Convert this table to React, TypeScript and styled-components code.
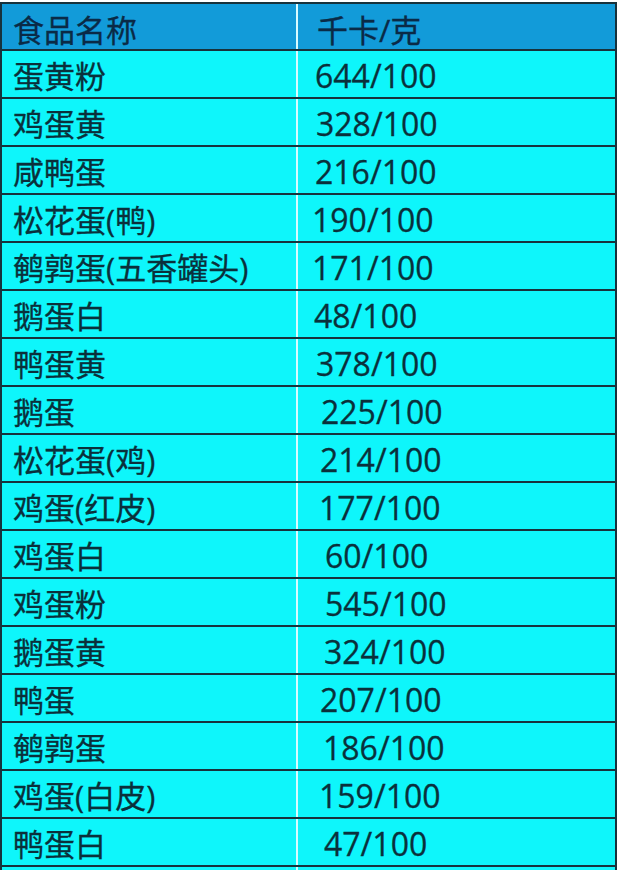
import * as React from 'react'
import styled, { createGlobalStyle } from 'styled-components'

const GlobalStyle = createGlobalStyle`
  html, body {
    margin: 0;
    padding: 0;
    background: #ffffff;
  }
  body {
    font-family: "Open Sans", "Noto Sans CJK SC", sans-serif;
  }
`

const Table = styled.div`
  width: 613px;
  margin-top: 2px;
  border: 2px solid #17323c;
  border-bottom: none;
  display: flex;
  flex-direction: column;
  font-size: 31px;
  line-height: 1;
`

const Row = styled.div<{ $head?: boolean }>`
  display: grid;
  grid-template-columns: 296px 1fr;
  height: ${p => (p.$head ? 45 : 46)}px;
  border-bottom: 2px solid #17323c;
  background: ${p => (p.$head ? '#129bd9' : '#0ef6fb')};
  color: ${p => (p.$head ? '#0a2a46' : '#0a303b')};
`

const NameCell = styled.div<{ $head?: boolean }>`
  display: flex;
  align-items: center;
  padding-left: 11px;
  padding-top: ${p => (p.$head ? 8 : 4)}px;
  border-right: 2px solid #d8fbff;
  white-space: nowrap;
  -webkit-text-stroke: 0.3px currentColor;
`

const ValueCell = styled.div<{ $indent: number; $head?: boolean }>`
  display: flex;
  align-items: center;
  padding-left: ${p => p.$indent}px;
  padding-top: ${p => (p.$head ? 8 : 4)}px;
  font-size: ${p => (p.$head ? 31 : 32)}px;
  white-space: nowrap;
  -webkit-text-stroke: 0.3px currentColor;
`

const rows: [string, string, number][] = [
  ['蛋黄粉', '644/100', 17],
  ['鸡蛋黄', '328/100', 18],
  ['咸鸭蛋', '216/100', 17],
  ['松花蛋(鸭)', '190/100', 14],
  ['鹌鹑蛋(五香罐头)', '171/100', 14],
  ['鹅蛋白', '48/100', 16],
  ['鸭蛋黄', '378/100', 18],
  ['鹅蛋', '225/100', 23],
  ['松花蛋(鸡)', '214/100', 22],
  ['鸡蛋(红皮)', '177/100', 21],
  ['鸡蛋白', '60/100', 27],
  ['鸡蛋粉', '545/100', 27],
  ['鹅蛋黄', '324/100', 26],
  ['鸭蛋', '207/100', 22],
  ['鹌鹑蛋', '186/100', 25],
  ['鸡蛋(白皮)', '159/100', 21],
  ['鸭蛋白', '47/100', 26],
]

export default function App() {
  return (
    <>
      <GlobalStyle />
      <Table>
        <Row $head>
          <NameCell $head>食品名称</NameCell>
          <ValueCell $head $indent={19}>千卡/克</ValueCell>
        </Row>
        {rows.map(([name, kcal, indent]) => (
          <Row key={name}>
            <NameCell>{name}</NameCell>
            <ValueCell $indent={indent}>{kcal}</ValueCell>
          </Row>
        ))}
        <Row>
          <NameCell />
          <ValueCell $indent={20} />
        </Row>
      </Table>
    </>
  )
}
